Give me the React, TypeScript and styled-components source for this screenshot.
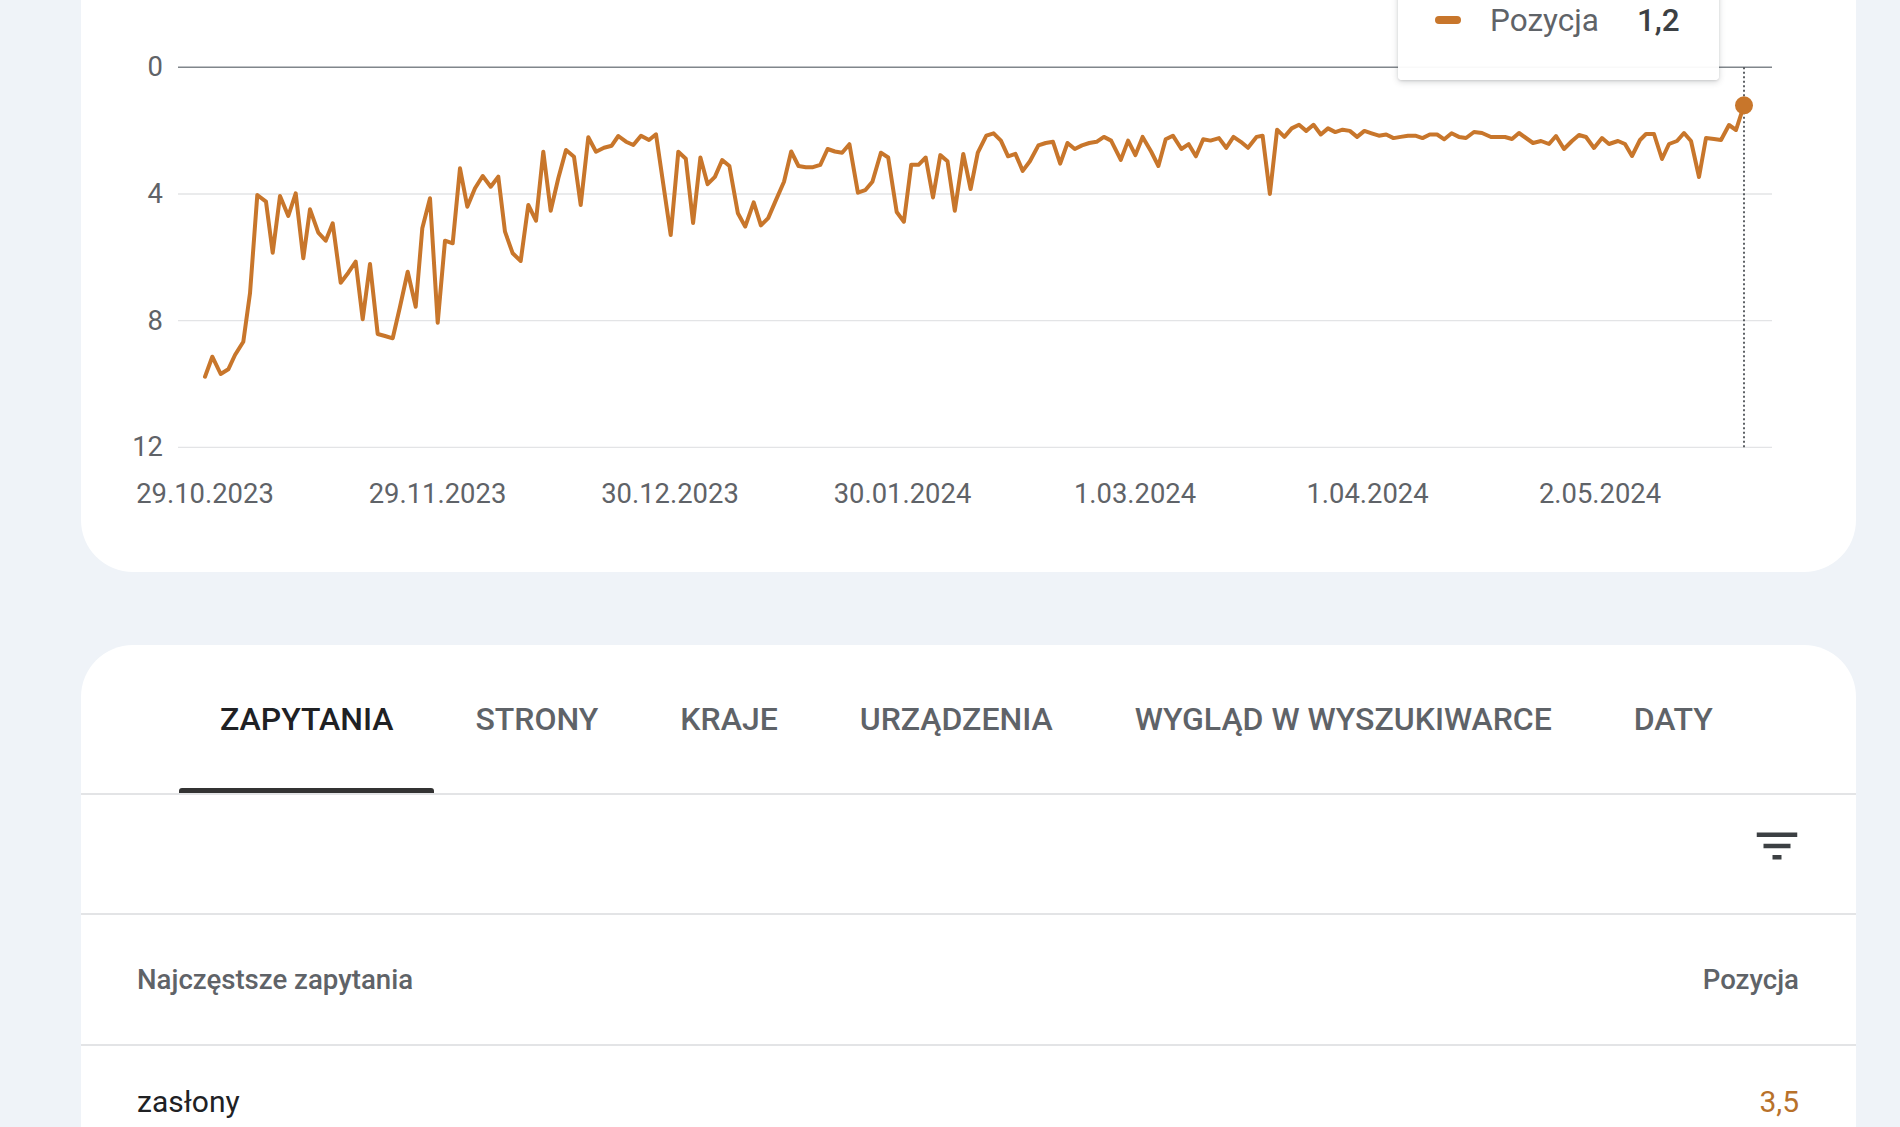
import styled, { createGlobalStyle } from "styled-components";

const GlobalStyle = createGlobalStyle`
  body {
    margin: 0;
    background: #eff3f8;
    font-family: Roboto, "Noto Sans", Arial, sans-serif;
  }
`;

// chart geometry, in page pixels (the svg viewBox is offset so x matches the page)
const CARD_LEFT = 81;
const CHART_W = 1775;
const CHART_H = 540;
const PLOT_LEFT = 178;
const PLOT_RIGHT = 1772;
const TOP = 67.3;
const UNIT = 31.67;
const LINE_COLOR = "#c8762b";

const Y_TICKS = [0, 4, 8, 12];
const X_TICKS = [
  "29.10.2023",
  "29.11.2023",
  "30.12.2023",
  "30.01.2024",
  "1.03.2024",
  "1.04.2024",
  "2.05.2024",
];

// daily average position, traced as [x, y]
const TRACE: [number, number][] = [
  [205, 376.7], [212.3, 356.7], [220.7, 374], [228.3, 369.3], [235, 355],
  [243.3, 341.7], [250, 293.3], [257.3, 195], [266, 201.7], [272.7, 252.7],
  [280, 196], [288.3, 216], [295.7, 193.3], [303.3, 258.3], [310, 209.3],
  [318.3, 232.7], [325.7, 240.7], [332.7, 223.3], [340.7, 282.7], [348.3, 272.7],
  [355.7, 261.7], [362.7, 319.3], [370, 264], [377.7, 334], [385, 336],
  [392.7, 338.3], [400, 306.7], [407.7, 271.7], [415.7, 306.7], [422.3, 228.3],
  [430, 198.3], [437.7, 322.7], [445, 240.7], [452.7, 243.3], [460, 168.3],
  [467.3, 206.7], [475, 188.3], [482.7, 176], [490.7, 186.7], [498.3, 176.7],
  [505, 231.7], [512.7, 253.3], [520.7, 261], [528.3, 205], [536, 220.7],
  [543.3, 151.7], [550.7, 210.7], [558.3, 178.3], [566, 150], [574, 156.7],
  [580.7, 205], [588.3, 137.3], [596, 151.7], [604, 147.7], [611.7, 145.7],
  [618.3, 136], [626, 141.7], [633.3, 145], [641, 135.7], [649, 140],
  [656, 134.3], [670.7, 235], [678.3, 151.7], [685.8, 158.7], [693.1, 223],
  [700.4, 157.5], [707.6, 184.2], [714.9, 176.9], [722.2, 160], [729.4, 166],
  [737.9, 213.3], [745.2, 226.6], [753.7, 202.4], [760.9, 225.4], [768.2, 218.1],
  [775.5, 201.1], [784, 181.8], [791.2, 151.5], [798.5, 166], [805.8, 167.2],
  [813, 167.2], [820.3, 164.8], [827.6, 149], [834.9, 151.5], [842.1, 152.7],
  [849.4, 144.2], [857.9, 192.7], [865.2, 190.2], [872.4, 181.8], [880.9, 152.7],
  [888.2, 157.5], [896.7, 212], [903.9, 221.7], [911.2, 164.8], [918.5, 164.8],
  [925.7, 157.5], [933, 197.5], [940.3, 155.1], [947.5, 161.2], [954.8, 210.8],
  [963.3, 153.9], [970.6, 189], [977.8, 152.7], [986.3, 135.7], [993.6, 133.3],
  [1000.9, 140.6], [1008.1, 156.3], [1015.4, 153.9], [1022.7, 170.9], [1029.9, 161.2],
  [1038.4, 145.4], [1045.7, 143], [1053, 141.8], [1060.2, 163.6], [1067.5, 143],
  [1074.8, 149], [1082, 145.4], [1089.3, 143], [1096.6, 141.8], [1103.9, 136.9],
  [1111.1, 140.6], [1120.8, 159.9], [1128.1, 140.6], [1135.4, 155.1], [1142.6, 136.9],
  [1151.1, 151.5], [1158.4, 166], [1165.7, 139.3], [1172.9, 135.7], [1181.4, 149],
  [1188.7, 144.2], [1195.9, 156.3], [1203.2, 139.3], [1210.5, 140.6], [1219, 138.1],
  [1226.2, 147.8], [1233.5, 136.9], [1240.8, 141.8], [1248, 147.8], [1256.5, 136.9],
  [1262.6, 135.7], [1269.9, 193.9], [1277.1, 129.7], [1284.4, 136.9], [1291.7, 128.4],
  [1299, 124.8], [1306.2, 130.9], [1313.5, 124.8], [1320.8, 134.5], [1328, 128.4],
  [1335.3, 132.1], [1342.6, 129.7], [1349.8, 130.9], [1357.1, 136.9], [1364.4, 130.9],
  [1371.6, 133.3], [1378.9, 135.7], [1386.2, 134.5], [1393.5, 138.1], [1400.7, 136.9],
  [1408, 135.7], [1415.3, 135.7], [1422.5, 138.1], [1429.8, 134.5], [1437.1, 134.5],
  [1444.3, 139.3], [1451.6, 133.3], [1458.9, 136.9], [1466, 138], [1474, 132],
  [1482, 133], [1491, 137], [1499, 137], [1505, 137], [1512, 139],
  [1519, 133], [1526, 138], [1533, 143], [1541, 141], [1549, 144],
  [1556, 136], [1564, 149], [1572, 141], [1579, 135], [1586, 137],
  [1594, 148], [1602, 138], [1609, 144], [1618, 141], [1625, 144],
  [1632, 156], [1640, 140], [1646, 134], [1654, 134], [1662, 159],
  [1669, 144], [1677, 141], [1684, 133], [1691, 141], [1699, 177],
  [1706, 138], [1714, 139], [1721, 140], [1729, 125], [1736, 130],
  [1744, 105.3],
];

const TABS = [
  "ZAPYTANIA",
  "STRONY",
  "KRAJE",
  "URZĄDZENIA",
  "WYGLĄD W WYSZUKIWARCE",
  "DATY",
];

const PositionChart = () => {
  const last = TRACE[TRACE.length - 1];
  const points = TRACE.map(([x, y]) => `${x},${y}`).join(" ");
  return (
    <ChartSvg
      width={CHART_W}
      height={CHART_H}
      viewBox={`${CARD_LEFT} 0 ${CHART_W} ${CHART_H}`}
    >
      {Y_TICKS.map((tick) => {
        const y = TOP + tick * UNIT;
        return (
          <g key={tick}>
            <line
              x1={PLOT_LEFT}
              x2={PLOT_RIGHT}
              y1={y}
              y2={y}
              stroke={tick === 0 ? "#80868b" : "#e3e4e6"}
              strokeWidth={tick === 0 ? 1.6 : 1.4}
            />
            <text x={163} y={y} textAnchor="end" dominantBaseline="central">
              {tick}
            </text>
          </g>
        );
      })}
      {X_TICKS.map((label, i) => (
        <text
          key={label}
          x={205 + i * 232.5}
          y={494}
          textAnchor="middle"
          dominantBaseline="central"
        >
          {label}
        </text>
      ))}
      <line
        x1={last[0]}
        x2={last[0]}
        y1={TOP}
        y2={TOP + 12 * UNIT}
        stroke="#4d5156"
        strokeWidth={1.8}
        strokeDasharray="2 2.5"
      />
      <polyline
        points={points}
        fill="none"
        stroke={LINE_COLOR}
        strokeWidth={4}
        strokeLinejoin="round"
        strokeLinecap="round"
      />
      <circle cx={last[0]} cy={last[1]} r={9} fill={LINE_COLOR} />
    </ChartSvg>
  );
};

const FilterIcon = () => (
  <svg width="54" height="54" viewBox="0 0 24 24" fill="#3c4043">
    <path d="M10 18h4v-2h-4v2zM3 6v2h18V6H3zm3 7h12v-2H6v2z" />
  </svg>
);

const App = () => {
  return (
    <>
      <GlobalStyle />
      <Page>
        <ChartCard>
          <PositionChart />
          <Tooltip>
            <TooltipRow>
              <LegendDash />
              <TooltipLabel>Pozycja</TooltipLabel>
              <TooltipValue>1,2</TooltipValue>
            </TooltipRow>
          </Tooltip>
        </ChartCard>

        <TableCard>
          <TabBar>
            {TABS.map((tab, i) => (
              <Tab key={tab} $active={i === 0}>
                {tab}
              </Tab>
            ))}
          </TabBar>
          <Toolbar>
            <IconButton type="button" aria-label="Filtruj wiersze">
              <FilterIcon />
            </IconButton>
          </Toolbar>
          <HeaderRow>
            <HeaderCell>Najczęstsze zapytania</HeaderCell>
            <HeaderCell>Pozycja</HeaderCell>
          </HeaderRow>
          <DataRow>
            <QueryCell>zasłony</QueryCell>
            <ValueCell>3,5</ValueCell>
          </DataRow>
        </TableCard>
      </Page>
    </>
  );
};

const Page = styled.div`
  display: flex;
  flex-direction: column;
  padding: 0 44px 0 81px;
`;

const ChartCard = styled.div`
  position: relative;
  height: 572px;
  background: #ffffff;
  border-radius: 0 0 52px 52px;
`;

const ChartSvg = styled.svg`
  display: block;
  font-family: Roboto, "Noto Sans", Arial, sans-serif;
  font-size: 27.4px;
  fill: #5f6368;
`;

const Tooltip = styled.div`
  position: absolute;
  left: 1317px;
  top: -14px;
  width: 321px;
  box-sizing: border-box;
  padding: 14px 0 40px 37px;
  background: rgba(255, 255, 255, 0.95);
  border-radius: 0 0 4px 4px;
  box-shadow: 0 2px 6px rgba(60, 64, 67, 0.22), 0 1px 2px rgba(60, 64, 67, 0.12);
`;

const TooltipRow = styled.div`
  display: flex;
  align-items: center;
  height: 40px;
  font-size: 31.5px;
`;

const LegendDash = styled.span`
  width: 26px;
  height: 8px;
  border-radius: 4px;
  background: ${LINE_COLOR};
  margin-right: 29px;
`;

const TooltipLabel = styled.span`
  color: #5f6368;
  margin-right: 38px;
`;

const TooltipValue = styled.span`
  color: #3c4043;
  font-weight: 500;
`;

const TableCard = styled.div`
  margin-top: 73px;
  min-height: 560px;
  background: #ffffff;
  border-radius: 52px 52px 0 0;
`;

const TabBar = styled.div`
  display: flex;
  height: 148px;
  padding-left: 98px;
  border-bottom: 2px solid #e3e4e6;
`;

const Tab = styled.div<{ $active: boolean }>`
  position: relative;
  display: flex;
  align-items: center;
  padding: 0 41px;
  font-size: 32px;
  font-weight: 500;
  color: ${({ $active }) => ($active ? "#202124" : "#5f6368")};

  &::after {
    content: "";
    position: absolute;
    left: 0;
    right: 0;
    bottom: 0;
    height: 5px;
    border-radius: 3px 3px 0 0;
    background: #333333;
    display: ${({ $active }) => ($active ? "block" : "none")};
  }
`;

const Toolbar = styled.div`
  display: flex;
  justify-content: flex-end;
  align-items: flex-start;
  height: 120px;
  box-sizing: border-box;
  padding: 24px 52px 0 0;
  border-bottom: 2px solid #e3e4e6;
`;

const IconButton = styled.button`
  display: flex;
  padding: 0;
  border: none;
  background: none;
  cursor: pointer;
`;

const Row = styled.div`
  display: flex;
  align-items: center;
  justify-content: space-between;
  padding: 0 57px 0 56px;
`;

const HeaderRow = styled(Row)`
  height: 129px;
  border-bottom: 2px solid #e3e4e6;
`;

const DataRow = styled(Row)`
  height: 110px;
`;

const HeaderCell = styled.span`
  font-size: 27.6px;
  font-weight: 500;
  color: #5f6368;
`;

const QueryCell = styled.span`
  font-size: 30px;
  color: #202124;
`;

const ValueCell = styled.span`
  font-size: 30px;
  color: #b8712a;
`;

export default App;
